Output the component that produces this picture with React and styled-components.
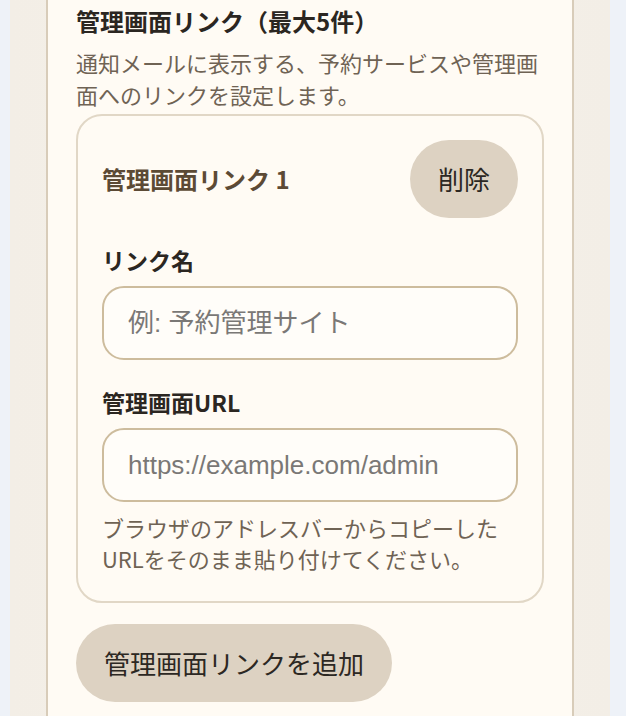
import styled, { createGlobalStyle } from "styled-components";

const GlobalStyle = createGlobalStyle`
  html, body {
    margin: 0;
    padding: 0;
    background: #eef2f8;
    font-family: "Noto Sans CJK JP", "Noto Sans", sans-serif;
  }
  * {
    box-sizing: border-box;
  }
`;

const App = () => {
  return (
    <>
      <GlobalStyle />
      <Page>
        <Panel>
          <Heading>管理画面リンク（最大5件）</Heading>
          <Description>
            通知メールに表示する、予約サービスや管理画面へのリンクを設定します。
          </Description>

          <LinkCard>
            <CardHeader>
              <CardTitle>管理画面リンク 1</CardTitle>
              <PillButton type="button">削除</PillButton>
            </CardHeader>

            <Field>
              <Label htmlFor="link-name-1">リンク名</Label>
              <Input id="link-name-1" placeholder="例: 予約管理サイト" />
            </Field>

            <Field>
              <Label htmlFor="link-url-1">管理画面URL</Label>
              <Input id="link-url-1" placeholder="https://example.com/admin" />
              <Hint>
                ブラウザのアドレスバーからコピーしたURLをそのまま貼り付けてください。
              </Hint>
            </Field>
          </LinkCard>

          <AddRow>
            <PillButton type="button">管理画面リンクを追加</PillButton>
          </AddRow>
        </Panel>
      </Page>
    </>
  );
};

const Page = styled.div`
  width: 600px;
  margin-left: 10px;
  min-height: 716px;
  padding: 0 36px;
  background: linear-gradient(90deg, #f3eee6 0%, #f5f1ea 50%, #f3eee6 100%);
`;

const Panel = styled.section`
  min-height: 716px;
  padding: 4px 28px 24px;
  background: #fffbf4;
  border: 2px solid #d8ccb9;
  border-top: none;
  border-bottom: none;
  display: flex;
  flex-direction: column;
`;

const Heading = styled.h2`
  margin: 0;
  font-size: 24px;
  line-height: 34px;
  font-weight: 700;
  color: #2b2621;
`;

const Description = styled.p`
  margin: 8px 0 4px;
  font-size: 22px;
  line-height: 32px;
  color: #6f6354;
`;

const LinkCard = styled.div`
  border: 2px solid #e1d7c6;
  border-radius: 26px;
  padding: 24px 24px 27px;
  display: flex;
  flex-direction: column;
  gap: 26px;
`;

const CardHeader = styled.div`
  display: flex;
  align-items: center;
  justify-content: space-between;
`;

const CardTitle = styled.h3`
  margin: 0;
  font-size: 24px;
  line-height: 32px;
  font-weight: 700;
  color: #5c4a35;
`;

const PillButton = styled.button`
  height: 78px;
  padding: 0 28px;
  border: none;
  border-radius: 999px;
  background: #ddd2c2;
  color: #2c2823;
  font-family: "Noto Sans CJK JP", sans-serif;
  font-size: 26px;
  line-height: 1;
  cursor: pointer;
`;

const Field = styled.div`
  display: flex;
  flex-direction: column;
  gap: 10px;
`;

const Label = styled.label`
  font-size: 23px;
  line-height: 32px;
  font-weight: 700;
  color: #2b2621;
`;

const Input = styled.input`
  width: 100%;
  height: 74px;
  padding: 0 24px;
  border: 2px solid #cdbc9d;
  border-radius: 22px;
  background: #fffdf9;
  font-family: "Liberation Sans", "Noto Sans CJK JP", sans-serif;
  font-size: 26px;
  color: #2b2621;
  outline: none;

  &::placeholder {
    color: #7a7876;
  }
`;

const Hint = styled.p`
  margin: 0;
  font-size: 22px;
  line-height: 31px;
  color: #6f6354;
`;

const AddRow = styled.div`
  display: flex;
  margin-top: 21px;
`;

export default App;
